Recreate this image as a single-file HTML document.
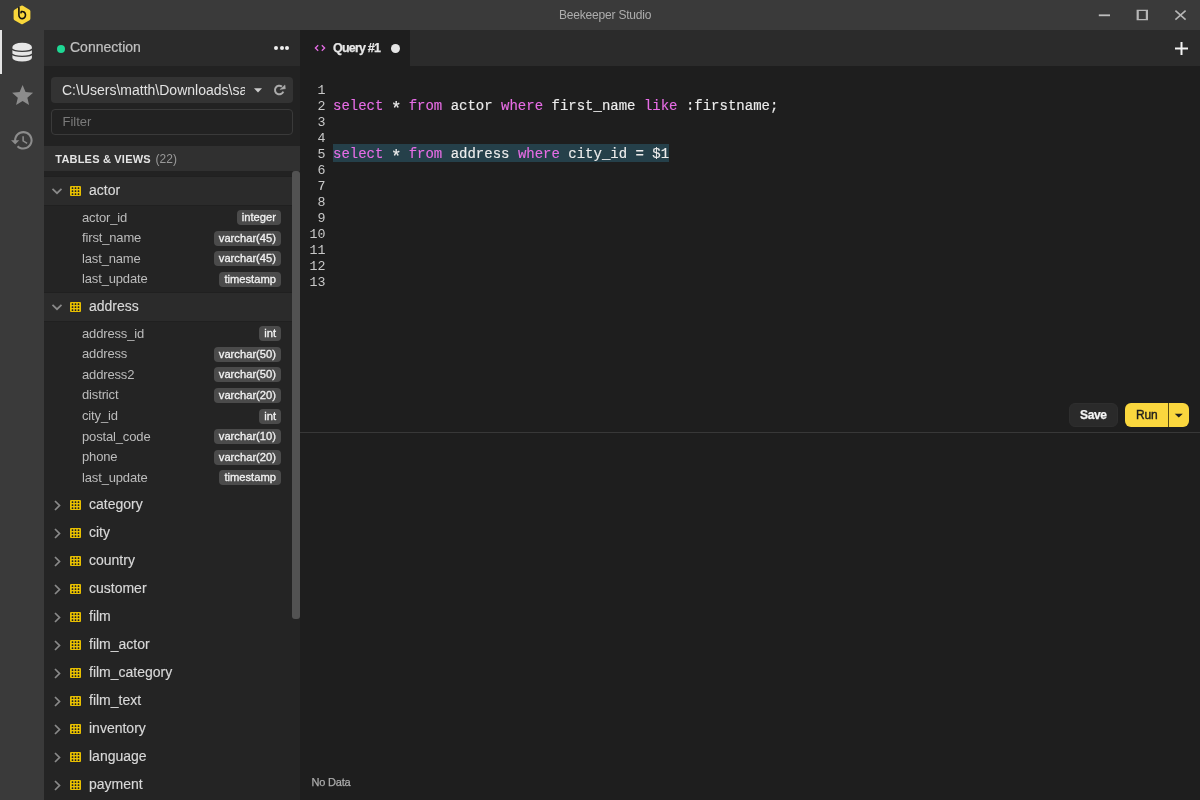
<!DOCTYPE html>
<html><head><meta charset="utf-8">
<style>
*{box-sizing:border-box;margin:0;padding:0}
html,body{width:1200px;height:800px;overflow:hidden;background:#1e1e1e;font-family:"Liberation Sans",sans-serif;}
body{will-change:transform}
div,span,svg{position:absolute}
.tn,.cn,.bd,.kw{position:static}
#title{left:0;top:0;width:1200px;height:30px;background:#3a3a3a}
#ttl{left:559px;top:8.5px;width:100px;font-size:12px;line-height:12px;color:#adadad;letter-spacing:-0.2px;white-space:nowrap}
#rail{left:0;top:30px;width:44px;height:770px;background:#3a3a3a}
#side{left:44px;top:30px;width:256px;height:770px;background:#242424}
#shead{left:44px;top:30px;width:256px;height:36px;background:#2b2b2b}
#ctrls{left:44px;top:66px;width:256px;height:80px;background:#222222}
#thead{left:44px;top:146px;width:256px;height:25px;background:#303030}
#gap{left:44px;top:171px;width:256px;height:6px;background:#222222}
#tabs{left:300px;top:30px;width:900px;height:36px;background:#2b2b2b}
#tab1{left:300px;top:30px;width:110px;height:36px;background:#1e1e1e}
#conn{left:70px;top:40px;font-size:14px;line-height:14px;color:#c0c0c0;white-space:nowrap;-webkit-text-stroke:0.2px #c0c0c0}
#gdot{left:57px;top:44.5px;width:8px;height:8px;border-radius:50%;background:#1ed894}
.dot3{top:46px;width:4px;height:4px;border-radius:50%;background:#f0f0f0}
#sel{left:51px;top:77px;width:242px;height:26px;background:#333333;border-radius:4px}
#path{left:62px;top:83.2px;width:183px;overflow:hidden;font-size:14px;line-height:14px;color:#e2e2e2;white-space:nowrap}
#filter{left:51px;top:109px;width:242px;height:26px;border:1px solid #3a3a3a;border-radius:4px;background:#222222}
#fph{left:62.5px;top:114.8px;font-size:13px;line-height:13px;color:#7a7a7a}
#tv{left:55.3px;top:153.6px;font-size:11px;line-height:11px;font-weight:bold;color:#e4e4e4;letter-spacing:0.2px;white-space:nowrap}
#tvc{left:155.6px;top:153.0px;font-size:12px;line-height:12px;color:#9a9a9a;white-space:nowrap}
.th{left:44px;width:248px;height:28px}
.th.open{background:#2b2b2b;box-shadow:0 -1px 0 #202020,0 1px 0 #202020}
.chev{left:7.2px;top:10.3px}
.chevr{left:9px;top:9.5px}
.grid{left:26px;top:9px}
.th .tn{position:absolute;left:45px;top:6.15px;font-size:14px;line-height:14px;color:#d8d8d8;white-space:nowrap;-webkit-text-stroke:0.15px #d8d8d8}
.cr{left:44px;width:248px;height:20.6px}
.cr .cn{position:absolute;left:38px;top:2.5px;font-size:13px;line-height:13px;color:#bcbcbc;letter-spacing:-0.15px;white-space:nowrap}
.cr .bd{position:absolute;right:11px;top:2.0px;height:15px;padding:0 5px;border-radius:4px;background:#4b4b4b;color:#f2f2f2;font-size:11.2px;line-height:15px;-webkit-text-stroke:0.3px #f2f2f2;white-space:nowrap}
#thumb{left:292px;top:171px;width:8px;height:448px;background:#525252;border-radius:3px}
#editor{left:300px;top:66px;width:900px;height:734px;background:#1e1e1e}
.ln{left:300px;width:25.5px;text-align:right;font-family:"Liberation Mono",monospace;font-size:13.3px;line-height:14px;color:#c8c8c8;margin-top:0.6px}
.cl{left:333px;font-family:"Liberation Mono",monospace;font-size:14px;line-height:14px;color:#ececec;white-space:pre;-webkit-text-stroke:0.15px currentColor}
.kw{color:#e76de6}
.ast{position:relative;display:inline-block;transform:translateY(3.4px) scale(1.25)}
#hl{left:333px;top:144px;width:336px;height:18px;background:#25404a}
#qtab{left:333px;top:42.2px;font-size:12.5px;line-height:12.5px;font-weight:bold;color:#e6e6e6;letter-spacing:-0.8px;-webkit-text-stroke:0.25px #e6e6e6;white-space:nowrap}
#wdot{left:390.8px;top:43.5px;width:9.2px;height:9.2px;border-radius:50%;background:#e6e6e6}
#save{left:1069px;top:403px;width:49px;height:24px;border-radius:6px;background:#2a2a2a;border:1px solid #2e2e2e}
#savet{left:1080px;top:408.6px;font-size:12px;line-height:12px;font-weight:bold;color:#f4f4f4;letter-spacing:-0.35px;-webkit-text-stroke:0.25px #f4f4f4}
#run{left:1125px;top:403px;width:64px;height:24px;border-radius:6px;background:#fad73e}
#rundiv{left:1168px;top:403px;width:1px;height:24px;background:#5a4d14}
#runt{left:1136px;top:408.6px;font-size:12px;line-height:12px;color:#1c1c1c;letter-spacing:-0.2px;-webkit-text-stroke:0.35px #1c1c1c}
#divider{left:300px;top:432px;width:900px;height:1px;background:#383838}
#nodata{left:311.5px;top:776.6px;font-size:11px;line-height:11px;color:#ababab;letter-spacing:-0.2px;-webkit-text-stroke:0.25px #ababab}
</style></head><body>
<div id="title"></div>
<div id="ttl">Beekeeper Studio</div>
<svg style="left:0;top:0" width="44" height="30" viewBox="0 0 44 30">
  <path d="M22 7.4 L28.6 11.2 L28.6 18.6 L22 22.4 L15.4 18.6 L15.4 11.2 Z" fill="#f9d73b" stroke="#f9d73b" stroke-width="3.6" stroke-linejoin="round"/>
  <path d="M18.9 7.6 L18.9 15 A3.3 3.6 0 1 0 21.3 11.6 L21.0 12.8" fill="none" stroke="#111" stroke-width="1.6" stroke-linecap="round" stroke-linejoin="round"/>
</svg>
<svg style="left:1090px;top:0" width="110" height="30" viewBox="1090 0 110 30">
  <rect x="1098.8" y="14.4" width="11.2" height="1.8" fill="#bdbdbd"/>
  <path d="M1136.6 9.8 H1148 V20.2 H1136.6 Z M1138.8 11.1 V18.9 H1145.8 V11.1 Z" fill="#b6b6b6" fill-rule="evenodd"/>
  <path d="M1175.4 10.7 L1185.6 19.6 M1185.6 10.7 L1175.4 19.6" stroke="#b6b6b6" stroke-width="1.6"/>
</svg>
<div id="rail"></div>
<div style="left:0;top:30px;width:2px;height:44px;background:#e4e4e4"></div>
<svg style="left:0;top:30px" width="44" height="44" viewBox="0 30 44 44">
  <path d="M12.4 47 A9.75 4.25 0 0 1 31.9 47 L31.9 58 A9.75 3.4 0 0 1 12.4 58 Z" fill="#e6e6e6"/>
  <path d="M12.2 48.7 A9.9 2.6 0 0 0 32.1 48.7" fill="none" stroke="#3a3a3a" stroke-width="1.3"/>
  <path d="M12.2 53.8 A9.9 2.6 0 0 0 32.1 53.8" fill="none" stroke="#3a3a3a" stroke-width="1.3"/>
</svg>
<svg style="left:9.9px;top:83.4px" width="25.2" height="25.2" viewBox="0 0 24 24"><path d="M12 17.27L18.18 21l-1.64-7.03L22 9.24l-7.19-.61L12 2 9.19 8.63 2 9.24l5.46 4.73L5.82 21z" fill="#8c8c8c"/></svg>
<svg style="left:9.8px;top:127.6px" width="24.7" height="24.7" viewBox="0 0 24 24"><path d="M13 3c-4.97 0-9 4.030-9 9H1l3.89 3.89.07.14L9 12H6c0-3.87 3.13-7 7-7s7 3.13 7 7-3.13 7-7 7c-1.93 0-3.680-.79-4.94-2.06l-1.42 1.42C8.270 19.99 10.51 21 13 21c4.97 0 9-4.03 9-9s-4.03-9-9-9zm-1 5v5l4.28 2.54.72-1.21-3.5-2.08V8H12z" fill="#8c8c8c"/></svg>
<div id="side"></div>
<div id="shead"></div>
<div id="gdot"></div>
<div id="conn">Connection</div>
<div class="dot3" style="left:274.3px"></div>
<div class="dot3" style="left:279.5px"></div>
<div class="dot3" style="left:284.5px"></div>
<div id="ctrls"></div>
<div id="sel"></div>
<div id="path">C:\Users\matth\Downloads\sakila.db</div>
<svg style="left:253px;top:87.5px" width="10" height="5" viewBox="0 0 10 5"><path d="M1 0.2 L9 0.2 L5 4.6 Z" fill="#cccccc"/></svg>
<svg style="left:270px;top:82px" width="20" height="16" viewBox="270 82 20 16"><path d="M283.3 91.6 A4.3 4.3 0 1 1 281.9 86.6" fill="none" stroke="#acacac" stroke-width="2"/><path d="M285 84.9 L285.4 88.8 L279.9 89.5 Z" fill="#acacac" stroke="#acacac" stroke-width="0.4" stroke-linejoin="round"/></svg>
<div id="filter"></div>
<div id="fph">Filter</div>
<div id="thead"></div>
<div id="tv">TABLES &amp; VIEWS</div>
<div id="tvc">(22)</div>
<div id="gap"></div>
<div class="th open" style="top:177px"><svg class="chev" width="12" height="8" viewBox="0 0 12 8"><path d="M1.5 1.8 L6 6.2 L10.5 1.8" fill="none" stroke="#8a8a8a" stroke-width="1.7"/></svg><svg class="grid" width="11" height="10" viewBox="0 0 11 10"><rect x="0" y="0" width="11" height="10" rx="1" fill="#e8c000"/><rect x="1.7" y="1.2" width="1.6" height="1.8" rx="0.5" fill="#1c1c28"/><rect x="1.7" y="4.2" width="1.6" height="1.8" rx="0.5" fill="#1c1c28"/><rect x="1.7" y="7.2" width="1.6" height="1.8" rx="0.5" fill="#1c1c28"/><rect x="4.7" y="1.2" width="1.6" height="1.8" rx="0.5" fill="#1c1c28"/><rect x="4.7" y="4.2" width="1.6" height="1.8" rx="0.5" fill="#1c1c28"/><rect x="4.7" y="7.2" width="1.6" height="1.8" rx="0.5" fill="#1c1c28"/><rect x="7.7" y="1.2" width="1.6" height="1.8" rx="0.5" fill="#1c1c28"/><rect x="7.7" y="4.2" width="1.6" height="1.8" rx="0.5" fill="#1c1c28"/><rect x="7.7" y="7.2" width="1.6" height="1.8" rx="0.5" fill="#1c1c28"/></svg><span class="tn">actor</span></div><div class="cr" style="top:208.10px"><span class="cn">actor_id</span><span class="bd">integer</span></div><div class="cr" style="top:228.70px"><span class="cn">first_name</span><span class="bd">varchar(45)</span></div><div class="cr" style="top:249.30px"><span class="cn">last_name</span><span class="bd">varchar(45)</span></div><div class="cr" style="top:269.90px"><span class="cn">last_update</span><span class="bd">timestamp</span></div><div class="th open" style="top:293px"><svg class="chev" width="12" height="8" viewBox="0 0 12 8"><path d="M1.5 1.8 L6 6.2 L10.5 1.8" fill="none" stroke="#8a8a8a" stroke-width="1.7"/></svg><svg class="grid" width="11" height="10" viewBox="0 0 11 10"><rect x="0" y="0" width="11" height="10" rx="1" fill="#e8c000"/><rect x="1.7" y="1.2" width="1.6" height="1.8" rx="0.5" fill="#1c1c28"/><rect x="1.7" y="4.2" width="1.6" height="1.8" rx="0.5" fill="#1c1c28"/><rect x="1.7" y="7.2" width="1.6" height="1.8" rx="0.5" fill="#1c1c28"/><rect x="4.7" y="1.2" width="1.6" height="1.8" rx="0.5" fill="#1c1c28"/><rect x="4.7" y="4.2" width="1.6" height="1.8" rx="0.5" fill="#1c1c28"/><rect x="4.7" y="7.2" width="1.6" height="1.8" rx="0.5" fill="#1c1c28"/><rect x="7.7" y="1.2" width="1.6" height="1.8" rx="0.5" fill="#1c1c28"/><rect x="7.7" y="4.2" width="1.6" height="1.8" rx="0.5" fill="#1c1c28"/><rect x="7.7" y="7.2" width="1.6" height="1.8" rx="0.5" fill="#1c1c28"/></svg><span class="tn">address</span></div><div class="cr" style="top:324.10px"><span class="cn">address_id</span><span class="bd">int</span></div><div class="cr" style="top:344.70px"><span class="cn">address</span><span class="bd">varchar(50)</span></div><div class="cr" style="top:365.30px"><span class="cn">address2</span><span class="bd">varchar(50)</span></div><div class="cr" style="top:385.90px"><span class="cn">district</span><span class="bd">varchar(20)</span></div><div class="cr" style="top:406.50px"><span class="cn">city_id</span><span class="bd">int</span></div><div class="cr" style="top:427.10px"><span class="cn">postal_code</span><span class="bd">varchar(10)</span></div><div class="cr" style="top:447.70px"><span class="cn">phone</span><span class="bd">varchar(20)</span></div><div class="cr" style="top:468.30px"><span class="cn">last_update</span><span class="bd">timestamp</span></div><div class="th" style="top:490.5px"><svg class="chevr" width="9" height="11" viewBox="0 0 9 11"><path d="M2 1 L6.5 5.5 L2 10" fill="none" stroke="#8a8a8a" stroke-width="1.7"/></svg><svg class="grid" width="11" height="10" viewBox="0 0 11 10"><rect x="0" y="0" width="11" height="10" rx="1" fill="#e8c000"/><rect x="1.7" y="1.2" width="1.6" height="1.8" rx="0.5" fill="#1c1c28"/><rect x="1.7" y="4.2" width="1.6" height="1.8" rx="0.5" fill="#1c1c28"/><rect x="1.7" y="7.2" width="1.6" height="1.8" rx="0.5" fill="#1c1c28"/><rect x="4.7" y="1.2" width="1.6" height="1.8" rx="0.5" fill="#1c1c28"/><rect x="4.7" y="4.2" width="1.6" height="1.8" rx="0.5" fill="#1c1c28"/><rect x="4.7" y="7.2" width="1.6" height="1.8" rx="0.5" fill="#1c1c28"/><rect x="7.7" y="1.2" width="1.6" height="1.8" rx="0.5" fill="#1c1c28"/><rect x="7.7" y="4.2" width="1.6" height="1.8" rx="0.5" fill="#1c1c28"/><rect x="7.7" y="7.2" width="1.6" height="1.8" rx="0.5" fill="#1c1c28"/></svg><span class="tn">category</span></div><div class="th" style="top:518.5px"><svg class="chevr" width="9" height="11" viewBox="0 0 9 11"><path d="M2 1 L6.5 5.5 L2 10" fill="none" stroke="#8a8a8a" stroke-width="1.7"/></svg><svg class="grid" width="11" height="10" viewBox="0 0 11 10"><rect x="0" y="0" width="11" height="10" rx="1" fill="#e8c000"/><rect x="1.7" y="1.2" width="1.6" height="1.8" rx="0.5" fill="#1c1c28"/><rect x="1.7" y="4.2" width="1.6" height="1.8" rx="0.5" fill="#1c1c28"/><rect x="1.7" y="7.2" width="1.6" height="1.8" rx="0.5" fill="#1c1c28"/><rect x="4.7" y="1.2" width="1.6" height="1.8" rx="0.5" fill="#1c1c28"/><rect x="4.7" y="4.2" width="1.6" height="1.8" rx="0.5" fill="#1c1c28"/><rect x="4.7" y="7.2" width="1.6" height="1.8" rx="0.5" fill="#1c1c28"/><rect x="7.7" y="1.2" width="1.6" height="1.8" rx="0.5" fill="#1c1c28"/><rect x="7.7" y="4.2" width="1.6" height="1.8" rx="0.5" fill="#1c1c28"/><rect x="7.7" y="7.2" width="1.6" height="1.8" rx="0.5" fill="#1c1c28"/></svg><span class="tn">city</span></div><div class="th" style="top:546.5px"><svg class="chevr" width="9" height="11" viewBox="0 0 9 11"><path d="M2 1 L6.5 5.5 L2 10" fill="none" stroke="#8a8a8a" stroke-width="1.7"/></svg><svg class="grid" width="11" height="10" viewBox="0 0 11 10"><rect x="0" y="0" width="11" height="10" rx="1" fill="#e8c000"/><rect x="1.7" y="1.2" width="1.6" height="1.8" rx="0.5" fill="#1c1c28"/><rect x="1.7" y="4.2" width="1.6" height="1.8" rx="0.5" fill="#1c1c28"/><rect x="1.7" y="7.2" width="1.6" height="1.8" rx="0.5" fill="#1c1c28"/><rect x="4.7" y="1.2" width="1.6" height="1.8" rx="0.5" fill="#1c1c28"/><rect x="4.7" y="4.2" width="1.6" height="1.8" rx="0.5" fill="#1c1c28"/><rect x="4.7" y="7.2" width="1.6" height="1.8" rx="0.5" fill="#1c1c28"/><rect x="7.7" y="1.2" width="1.6" height="1.8" rx="0.5" fill="#1c1c28"/><rect x="7.7" y="4.2" width="1.6" height="1.8" rx="0.5" fill="#1c1c28"/><rect x="7.7" y="7.2" width="1.6" height="1.8" rx="0.5" fill="#1c1c28"/></svg><span class="tn">country</span></div><div class="th" style="top:574.5px"><svg class="chevr" width="9" height="11" viewBox="0 0 9 11"><path d="M2 1 L6.5 5.5 L2 10" fill="none" stroke="#8a8a8a" stroke-width="1.7"/></svg><svg class="grid" width="11" height="10" viewBox="0 0 11 10"><rect x="0" y="0" width="11" height="10" rx="1" fill="#e8c000"/><rect x="1.7" y="1.2" width="1.6" height="1.8" rx="0.5" fill="#1c1c28"/><rect x="1.7" y="4.2" width="1.6" height="1.8" rx="0.5" fill="#1c1c28"/><rect x="1.7" y="7.2" width="1.6" height="1.8" rx="0.5" fill="#1c1c28"/><rect x="4.7" y="1.2" width="1.6" height="1.8" rx="0.5" fill="#1c1c28"/><rect x="4.7" y="4.2" width="1.6" height="1.8" rx="0.5" fill="#1c1c28"/><rect x="4.7" y="7.2" width="1.6" height="1.8" rx="0.5" fill="#1c1c28"/><rect x="7.7" y="1.2" width="1.6" height="1.8" rx="0.5" fill="#1c1c28"/><rect x="7.7" y="4.2" width="1.6" height="1.8" rx="0.5" fill="#1c1c28"/><rect x="7.7" y="7.2" width="1.6" height="1.8" rx="0.5" fill="#1c1c28"/></svg><span class="tn">customer</span></div><div class="th" style="top:602.5px"><svg class="chevr" width="9" height="11" viewBox="0 0 9 11"><path d="M2 1 L6.5 5.5 L2 10" fill="none" stroke="#8a8a8a" stroke-width="1.7"/></svg><svg class="grid" width="11" height="10" viewBox="0 0 11 10"><rect x="0" y="0" width="11" height="10" rx="1" fill="#e8c000"/><rect x="1.7" y="1.2" width="1.6" height="1.8" rx="0.5" fill="#1c1c28"/><rect x="1.7" y="4.2" width="1.6" height="1.8" rx="0.5" fill="#1c1c28"/><rect x="1.7" y="7.2" width="1.6" height="1.8" rx="0.5" fill="#1c1c28"/><rect x="4.7" y="1.2" width="1.6" height="1.8" rx="0.5" fill="#1c1c28"/><rect x="4.7" y="4.2" width="1.6" height="1.8" rx="0.5" fill="#1c1c28"/><rect x="4.7" y="7.2" width="1.6" height="1.8" rx="0.5" fill="#1c1c28"/><rect x="7.7" y="1.2" width="1.6" height="1.8" rx="0.5" fill="#1c1c28"/><rect x="7.7" y="4.2" width="1.6" height="1.8" rx="0.5" fill="#1c1c28"/><rect x="7.7" y="7.2" width="1.6" height="1.8" rx="0.5" fill="#1c1c28"/></svg><span class="tn">film</span></div><div class="th" style="top:630.5px"><svg class="chevr" width="9" height="11" viewBox="0 0 9 11"><path d="M2 1 L6.5 5.5 L2 10" fill="none" stroke="#8a8a8a" stroke-width="1.7"/></svg><svg class="grid" width="11" height="10" viewBox="0 0 11 10"><rect x="0" y="0" width="11" height="10" rx="1" fill="#e8c000"/><rect x="1.7" y="1.2" width="1.6" height="1.8" rx="0.5" fill="#1c1c28"/><rect x="1.7" y="4.2" width="1.6" height="1.8" rx="0.5" fill="#1c1c28"/><rect x="1.7" y="7.2" width="1.6" height="1.8" rx="0.5" fill="#1c1c28"/><rect x="4.7" y="1.2" width="1.6" height="1.8" rx="0.5" fill="#1c1c28"/><rect x="4.7" y="4.2" width="1.6" height="1.8" rx="0.5" fill="#1c1c28"/><rect x="4.7" y="7.2" width="1.6" height="1.8" rx="0.5" fill="#1c1c28"/><rect x="7.7" y="1.2" width="1.6" height="1.8" rx="0.5" fill="#1c1c28"/><rect x="7.7" y="4.2" width="1.6" height="1.8" rx="0.5" fill="#1c1c28"/><rect x="7.7" y="7.2" width="1.6" height="1.8" rx="0.5" fill="#1c1c28"/></svg><span class="tn">film_actor</span></div><div class="th" style="top:658.5px"><svg class="chevr" width="9" height="11" viewBox="0 0 9 11"><path d="M2 1 L6.5 5.5 L2 10" fill="none" stroke="#8a8a8a" stroke-width="1.7"/></svg><svg class="grid" width="11" height="10" viewBox="0 0 11 10"><rect x="0" y="0" width="11" height="10" rx="1" fill="#e8c000"/><rect x="1.7" y="1.2" width="1.6" height="1.8" rx="0.5" fill="#1c1c28"/><rect x="1.7" y="4.2" width="1.6" height="1.8" rx="0.5" fill="#1c1c28"/><rect x="1.7" y="7.2" width="1.6" height="1.8" rx="0.5" fill="#1c1c28"/><rect x="4.7" y="1.2" width="1.6" height="1.8" rx="0.5" fill="#1c1c28"/><rect x="4.7" y="4.2" width="1.6" height="1.8" rx="0.5" fill="#1c1c28"/><rect x="4.7" y="7.2" width="1.6" height="1.8" rx="0.5" fill="#1c1c28"/><rect x="7.7" y="1.2" width="1.6" height="1.8" rx="0.5" fill="#1c1c28"/><rect x="7.7" y="4.2" width="1.6" height="1.8" rx="0.5" fill="#1c1c28"/><rect x="7.7" y="7.2" width="1.6" height="1.8" rx="0.5" fill="#1c1c28"/></svg><span class="tn">film_category</span></div><div class="th" style="top:686.5px"><svg class="chevr" width="9" height="11" viewBox="0 0 9 11"><path d="M2 1 L6.5 5.5 L2 10" fill="none" stroke="#8a8a8a" stroke-width="1.7"/></svg><svg class="grid" width="11" height="10" viewBox="0 0 11 10"><rect x="0" y="0" width="11" height="10" rx="1" fill="#e8c000"/><rect x="1.7" y="1.2" width="1.6" height="1.8" rx="0.5" fill="#1c1c28"/><rect x="1.7" y="4.2" width="1.6" height="1.8" rx="0.5" fill="#1c1c28"/><rect x="1.7" y="7.2" width="1.6" height="1.8" rx="0.5" fill="#1c1c28"/><rect x="4.7" y="1.2" width="1.6" height="1.8" rx="0.5" fill="#1c1c28"/><rect x="4.7" y="4.2" width="1.6" height="1.8" rx="0.5" fill="#1c1c28"/><rect x="4.7" y="7.2" width="1.6" height="1.8" rx="0.5" fill="#1c1c28"/><rect x="7.7" y="1.2" width="1.6" height="1.8" rx="0.5" fill="#1c1c28"/><rect x="7.7" y="4.2" width="1.6" height="1.8" rx="0.5" fill="#1c1c28"/><rect x="7.7" y="7.2" width="1.6" height="1.8" rx="0.5" fill="#1c1c28"/></svg><span class="tn">film_text</span></div><div class="th" style="top:714.5px"><svg class="chevr" width="9" height="11" viewBox="0 0 9 11"><path d="M2 1 L6.5 5.5 L2 10" fill="none" stroke="#8a8a8a" stroke-width="1.7"/></svg><svg class="grid" width="11" height="10" viewBox="0 0 11 10"><rect x="0" y="0" width="11" height="10" rx="1" fill="#e8c000"/><rect x="1.7" y="1.2" width="1.6" height="1.8" rx="0.5" fill="#1c1c28"/><rect x="1.7" y="4.2" width="1.6" height="1.8" rx="0.5" fill="#1c1c28"/><rect x="1.7" y="7.2" width="1.6" height="1.8" rx="0.5" fill="#1c1c28"/><rect x="4.7" y="1.2" width="1.6" height="1.8" rx="0.5" fill="#1c1c28"/><rect x="4.7" y="4.2" width="1.6" height="1.8" rx="0.5" fill="#1c1c28"/><rect x="4.7" y="7.2" width="1.6" height="1.8" rx="0.5" fill="#1c1c28"/><rect x="7.7" y="1.2" width="1.6" height="1.8" rx="0.5" fill="#1c1c28"/><rect x="7.7" y="4.2" width="1.6" height="1.8" rx="0.5" fill="#1c1c28"/><rect x="7.7" y="7.2" width="1.6" height="1.8" rx="0.5" fill="#1c1c28"/></svg><span class="tn">inventory</span></div><div class="th" style="top:742.5px"><svg class="chevr" width="9" height="11" viewBox="0 0 9 11"><path d="M2 1 L6.5 5.5 L2 10" fill="none" stroke="#8a8a8a" stroke-width="1.7"/></svg><svg class="grid" width="11" height="10" viewBox="0 0 11 10"><rect x="0" y="0" width="11" height="10" rx="1" fill="#e8c000"/><rect x="1.7" y="1.2" width="1.6" height="1.8" rx="0.5" fill="#1c1c28"/><rect x="1.7" y="4.2" width="1.6" height="1.8" rx="0.5" fill="#1c1c28"/><rect x="1.7" y="7.2" width="1.6" height="1.8" rx="0.5" fill="#1c1c28"/><rect x="4.7" y="1.2" width="1.6" height="1.8" rx="0.5" fill="#1c1c28"/><rect x="4.7" y="4.2" width="1.6" height="1.8" rx="0.5" fill="#1c1c28"/><rect x="4.7" y="7.2" width="1.6" height="1.8" rx="0.5" fill="#1c1c28"/><rect x="7.7" y="1.2" width="1.6" height="1.8" rx="0.5" fill="#1c1c28"/><rect x="7.7" y="4.2" width="1.6" height="1.8" rx="0.5" fill="#1c1c28"/><rect x="7.7" y="7.2" width="1.6" height="1.8" rx="0.5" fill="#1c1c28"/></svg><span class="tn">language</span></div><div class="th" style="top:770.5px"><svg class="chevr" width="9" height="11" viewBox="0 0 9 11"><path d="M2 1 L6.5 5.5 L2 10" fill="none" stroke="#8a8a8a" stroke-width="1.7"/></svg><svg class="grid" width="11" height="10" viewBox="0 0 11 10"><rect x="0" y="0" width="11" height="10" rx="1" fill="#e8c000"/><rect x="1.7" y="1.2" width="1.6" height="1.8" rx="0.5" fill="#1c1c28"/><rect x="1.7" y="4.2" width="1.6" height="1.8" rx="0.5" fill="#1c1c28"/><rect x="1.7" y="7.2" width="1.6" height="1.8" rx="0.5" fill="#1c1c28"/><rect x="4.7" y="1.2" width="1.6" height="1.8" rx="0.5" fill="#1c1c28"/><rect x="4.7" y="4.2" width="1.6" height="1.8" rx="0.5" fill="#1c1c28"/><rect x="4.7" y="7.2" width="1.6" height="1.8" rx="0.5" fill="#1c1c28"/><rect x="7.7" y="1.2" width="1.6" height="1.8" rx="0.5" fill="#1c1c28"/><rect x="7.7" y="4.2" width="1.6" height="1.8" rx="0.5" fill="#1c1c28"/><rect x="7.7" y="7.2" width="1.6" height="1.8" rx="0.5" fill="#1c1c28"/></svg><span class="tn">payment</span></div>
<div id="thumb"></div>
<div id="editor"></div>
<div id="tabs"></div>
<div id="tab1"></div>
<svg style="left:313px;top:43px" width="14" height="10" viewBox="0 0 14 10"><path d="M5.2 2.3 L2.4 5 L5.2 7.7 M8.8 2.3 L11.6 5 L8.8 7.7" fill="none" stroke="#e46ce4" stroke-width="1.3"/></svg>
<div id="qtab">Query #1</div>
<div id="wdot"></div>
<svg style="left:1174px;top:41px" width="15" height="15" viewBox="0 0 15 15"><path d="M7.5 1 V14 M1 7.5 H14" stroke="#f4f4f4" stroke-width="2"/></svg>
<div id="hl"></div>
<div class="ln" style="top:83px">1</div><div class="ln" style="top:99px">2</div><div class="cl" style="top:99px"><span class="kw">select</span> <span class="ast">*</span> <span class="kw">from</span> actor <span class="kw">where</span> first_name <span class="kw">like</span> :firstname;</div><div class="ln" style="top:115px">3</div><div class="ln" style="top:131px">4</div><div class="ln" style="top:147px">5</div><div class="cl" style="top:147px"><span class="kw">select</span> <span class="ast">*</span> <span class="kw">from</span> address <span class="kw">where</span> city_id = $1</div><div class="ln" style="top:163px">6</div><div class="ln" style="top:179px">7</div><div class="ln" style="top:195px">8</div><div class="ln" style="top:211px">9</div><div class="ln" style="top:227px">10</div><div class="ln" style="top:243px">11</div><div class="ln" style="top:259px">12</div><div class="ln" style="top:275px">13</div>
<div id="save"></div>
<div id="savet">Save</div>
<div id="run"></div>
<div id="rundiv"></div>
<div id="runt">Run</div>
<svg style="left:1173px;top:411.5px" width="11" height="7" viewBox="0 0 11 7"><path d="M1.7 1.7 L9.8 1.7 L5.75 5.6 Z" fill="#1e1e1e"/></svg>
<div id="divider"></div>
<div id="nodata">No Data</div>
</body></html>
